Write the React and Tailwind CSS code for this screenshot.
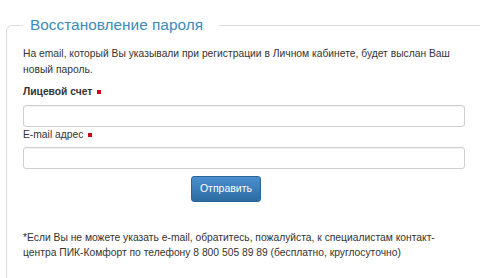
const Required = () => (
  <span className="inline-block w-[4px] h-[4px] bg-[#d0021b] ml-[5px] align-[1px]" />
);

export default function App() {
  return (
    <div className="min-h-screen bg-white pt-[15px] pl-[6px] font-['Liberation_Sans',Arial,sans-serif] text-[#333]">
      <fieldset className="border-l border-t border-[#dcdcdc] rounded-tl-[6px] pl-[16px] pr-[15px]">
        <legend className="pl-[7px] pr-[16px] text-[15.4px] leading-[20px] text-[#3a8bbb]">
          Восстановление пароля
        </legend>

        <p className="mt-[11px] text-[10.3px] leading-[15.5px]">
          На email, который Вы указывали при регистрации в Личном кабинете, будет выслан Ваш новый пароль.
        </p>

        <form onSubmit={(e) => e.preventDefault()} className="mt-[7px]">
          <label className="block text-[10.3px] leading-[15.5px] font-bold">
            Лицевой счет
            <Required />
          </label>
          <input
            type="text"
            className="block w-full h-[22px] mt-[5px] border border-[#cfcfcf] rounded-[3px] shadow-[inset_0_1px_1px_rgba(0,0,0,0.06)]"
          />

          <label className="block text-[10.3px] leading-[15.5px]">
            E-mail адрес
            <Required />
          </label>
          <input
            type="email"
            className="block w-full h-[22px] mt-[5px] border border-[#cfcfcf] rounded-[3px] shadow-[inset_0_1px_1px_rgba(0,0,0,0.06)]"
          />

          <button
            type="submit"
            className="block ml-[168px] mt-[7px] w-[70px] h-[26px] rounded-[3px] border border-[#2a6496] bg-gradient-to-b from-[#4a8fd0] to-[#2d6ca2] text-white text-[10.5px]"
          >
            Отправить
          </button>
        </form>

        <p className="mt-[28px] text-[10.3px] leading-[15px]">
          *Если Вы не можете указать e-mail, обратитесь, пожалуйста, к специалистам контакт-центра ПИК-Комфорт по телефону 8 800 505 89 89 (бесплатно, круглосуточно)
        </p>
        <div className="h-[30px]" />
      </fieldset>
    </div>
  );
}
